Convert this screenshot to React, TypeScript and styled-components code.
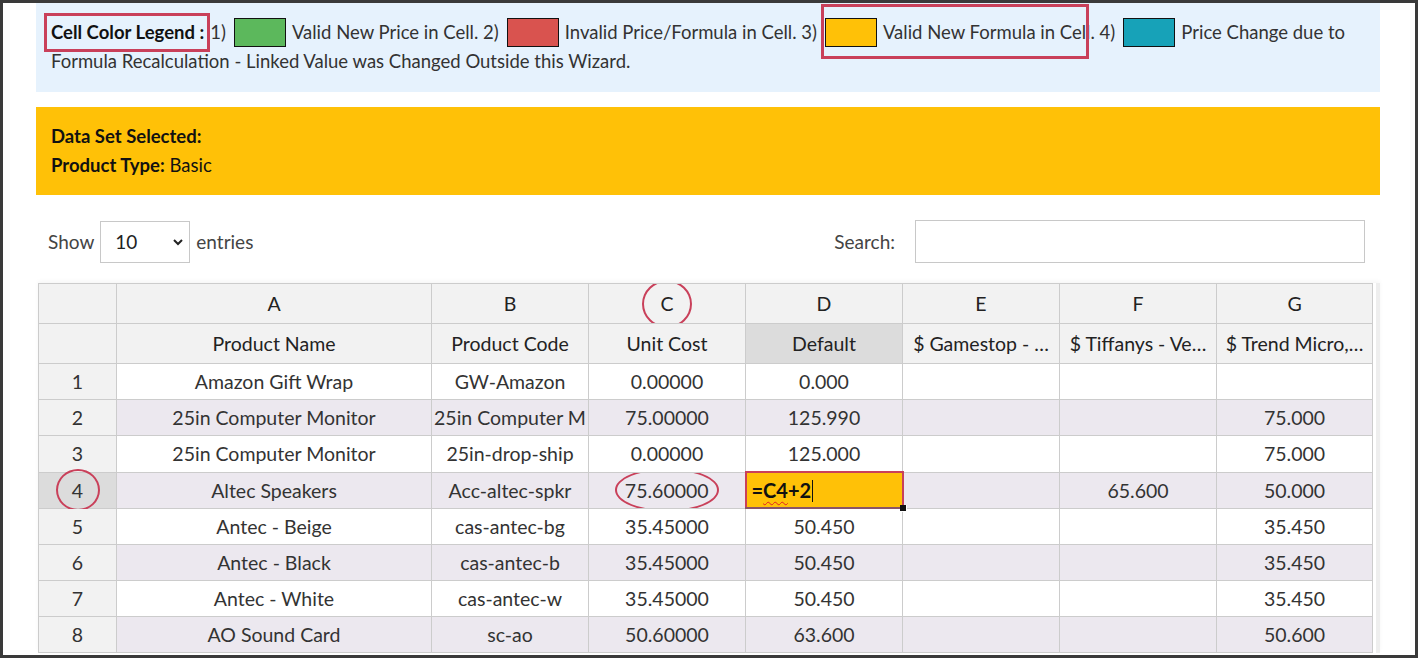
import React from 'react';
import styled, { createGlobalStyle } from 'styled-components';

const GlobalStyle = createGlobalStyle`
  html, body {
    margin: 0;
    padding: 0;
    background: #ffffff;
  }
  body {
    font-family: Lato, "Noto Sans", sans-serif;
    color: #333333;
  }
`;

const ANNOTATION = '#c9405a';

const Frame = styled.div`
  box-sizing: border-box;
  width: 1418px;
  height: 658px;
  border: 3px solid #3a3a3a;
  overflow: hidden;
  padding: 0 35px 0 33px;
  background: #ffffff;
`;

const LegendPanel = styled.div`
  position: relative;
  background-color: #e6f2fd;
  padding: 15px 12px 16px 15px;
  font-size: 18.5px;
  line-height: 29px;
  color: #333;
`;

const LegendTitle = styled.span`
  display: inline-block;
  box-sizing: border-box;
  border: 3px solid ${ANNOTATION};
  padding: 2px 3px 2px 4px;
  line-height: 29px;
  margin: -5px 0 -5px -7px;
  font-weight: 700;
  color: #111;
`;

const Swatch = styled.span<{ $color: string }>`
  display: inline-block;
  box-sizing: border-box;
  width: 52px;
  height: 29px;
  vertical-align: -2px;
  margin: -6px 6px -6px 8px;
  background-color: ${p => p.$color};
  border: 1px solid #111;
`;

const Highlighted = styled.span`
  position: relative;

  &::after {
    content: '';
    position: absolute;
    box-sizing: border-box;
    left: 4px;
    top: -17px;
    width: 268px;
    height: 55px;
    border: 3px solid ${ANNOTATION};
    pointer-events: none;
  }
`;

const DataSetPanel = styled.div`
  margin-top: 15px;
  background-color: #ffc107;
  padding: 15px;
  font-size: 18.5px;
  line-height: 29px;
  color: #111;
`;

const Strong = styled.span`
  font-weight: 700;
`;

const Controls = styled.div`
  display: flex;
  align-items: center;
  justify-content: space-between;
  padding: 25px 15px 0 12px;
  font-size: 19px;
  color: #444;
`;

const LengthControl = styled.label`
  display: flex;
  align-items: center;
  gap: 6px;
`;

const SelectBox = styled.div`
  box-sizing: border-box;
  width: 90px;
  height: 42px;
  border: 1px solid #c8c8c8;
  display: flex;
  align-items: center;
  justify-content: space-between;
  padding: 0 4px 0 14px;
  color: #222;
`;

const SearchControl = styled.label`
  display: flex;
  align-items: center;
  gap: 20px;
`;

const SearchInput = styled.div`
  box-sizing: border-box;
  width: 450px;
  height: 43px;
  border: 1px solid #c8c8c8;
`;

const TableWrap = styled.div`
  margin-top: 20px;
  margin-left: 2px;
  padding-right: 4px;
  border-right: 4px solid #eeeeee;
  box-shadow: 0 -2px 4px rgba(0, 0, 0, 0.04);
  width: 1334px;
`;

const Sheet = styled.table`
  border-collapse: collapse;
  table-layout: fixed;
  width: 1334px;
  font-size: 19.5px;
  color: #333;
`;

const HeadCell = styled.th<{ $shade?: boolean }>`
  position: relative;
  height: 39px;
  padding: 0 4px;
  font-weight: 400;
  text-align: center;
  background-color: ${p => (p.$shade ? '#dcdcdc' : '#f2f2f2')};
  border: 1px solid #cccccc;
  white-space: nowrap;
  overflow: hidden;
  text-overflow: ellipsis;
  color: #222;
`;

const Row = styled.tr<{ $alt: boolean }>`
  background-color: ${p => (p.$alt ? '#ece8ef' : '#ffffff')};
`;

const NumCell = styled.td<{ $active?: boolean }>`
  position: relative;
  height: 35px;
  padding: 0;
  text-align: center;
  background-color: ${p => (p.$active ? '#dcdcdc' : '#f2f2f2')};
  border: 1px solid #cccccc;
  color: #333;
`;

const Cell = styled.td`
  position: relative;
  height: 35px;
  padding: 0 2px;
  text-align: center;
  border: 1px solid #cccccc;
  white-space: nowrap;
  overflow: hidden;
`;

const FormulaCell = styled.td`
  position: relative;
  height: 32px;
  padding: 0 5px;
  background-color: #ffc107;
  border: 2px solid ${ANNOTATION};
  border-bottom-color: #8a5566;
  font-size: 20px;
  font-weight: 700;
  color: #111;
  text-align: left;
`;

const Squiggle = styled.span`
  text-decoration: underline wavy #e02020;
  text-decoration-thickness: 1px;
  text-underline-offset: 3px;
`;

const Caret = styled.span`
  display: inline-block;
  width: 1px;
  height: 22px;
  background: #111;
  vertical-align: -4px;
  margin-left: 1px;
`;

const FillHandle = styled.span`
  position: absolute;
  right: -5px;
  bottom: -5px;
  width: 6px;
  height: 6px;
  background: #111;
  border: 1px solid #fff;
  border-left: none;
  border-top: none;
`;

const Ring = styled.span<{ $w: number; $h: number }>`
  position: absolute;
  left: 50%;
  top: 50%;
  width: ${p => p.$w}px;
  height: ${p => p.$h}px;
  transform: translate(-50%, -50%);
  border: 2px solid ${ANNOTATION};
  border-radius: 50%;
  pointer-events: none;
`;

const Chevron = () => (
  <svg width="14" height="14" viewBox="0 0 14 14">
    <path d="M3 5 L7 9 L11 5" fill="none" stroke="#222" strokeWidth="2" />
  </svg>
);

const columns = ['A', 'B', 'C', 'D', 'E', 'F', 'G'];
const headings = [
  'Product Name',
  'Product Code',
  'Unit Cost',
  'Default',
  '$ Gamestop - …',
  '$ Tiffanys - Ve…',
  '$ Trend Micro,…',
];
const widths = [78, 315, 157, 157, 157, 157, 157, 156];

const rows: string[][] = [
  ['Amazon Gift Wrap', 'GW-Amazon', '0.00000', '0.000', '', '', ''],
  ['25in Computer Monitor', '25in Computer M', '75.00000', '125.990', '', '', '75.000'],
  ['25in Computer Monitor', '25in-drop-ship', '0.00000', '125.000', '', '', '75.000'],
  ['Altec Speakers', 'Acc-altec-spkr', '75.60000', '=C4+2', '', '65.600', '50.000'],
  ['Antec - Beige', 'cas-antec-bg', '35.45000', '50.450', '', '', '35.450'],
  ['Antec - Black', 'cas-antec-b', '35.45000', '50.450', '', '', '35.450'],
  ['Antec - White', 'cas-antec-w', '35.45000', '50.450', '', '', '35.450'],
  ['AO Sound Card', 'sc-ao', '50.60000', '63.600', '', '', '50.600'],
];

const App: React.FC = () => {
  return (
    <>
      <GlobalStyle />
      <Frame>
        <LegendPanel>
          <LegendTitle>Cell Color Legend :</LegendTitle>1)
          <Swatch $color="#5cb85c" />
          Valid New Price in Cell. 2)
          <Swatch $color="#d9534f" />
          Invalid Price/Formula in Cell. 3)
          <Highlighted>
            <Swatch $color="#ffc107" />
            Valid New Formula in Cell.
          </Highlighted>{' '}
          4)
          <Swatch $color="#17a2b8" />
          Price Change due to Formula Recalculation - Linked Value was Changed Outside this Wizard.
        </LegendPanel>

        <DataSetPanel>
          <Strong>Data Set Selected:</Strong>
          <br />
          <Strong>Product Type:</Strong> Basic
        </DataSetPanel>

        <Controls>
          <LengthControl>
            Show
            <SelectBox>
              10
              <Chevron />
            </SelectBox>
            entries
          </LengthControl>
          <SearchControl>
            Search:
            <SearchInput />
          </SearchControl>
        </Controls>

        <TableWrap>
          <Sheet>
            <colgroup>
              {widths.map((w, i) => (
                <col key={i} style={{ width: w }} />
              ))}
            </colgroup>
            <thead>
              <tr>
                <HeadCell />
                {columns.map(c => (
                  <HeadCell key={c}>
                    {c}
                    {c === 'C' && <Ring $w={46} $h={44} />}
                  </HeadCell>
                ))}
              </tr>
              <tr>
                <HeadCell />
                {headings.map(h => (
                  <HeadCell key={h} $shade={h === 'Default'}>
                    {h}
                  </HeadCell>
                ))}
              </tr>
            </thead>
            <tbody>
              {rows.map((r, i) => (
                <Row key={i} $alt={i % 2 === 1}>
                  <NumCell $active={i === 3}>
                    {i + 1}
                    {i === 3 && <Ring $w={40} $h={38} />}
                  </NumCell>
                  {r.map((v, j) =>
                    i === 3 && j === 3 ? (
                      <FormulaCell key={j}>
                        =<Squiggle>C4</Squiggle>+2
                        <Caret />
                        <FillHandle />
                      </FormulaCell>
                    ) : (
                      <Cell key={j}>
                        {v}
                        {i === 3 && j === 2 && <Ring $w={100} $h={40} />}
                      </Cell>
                    ),
                  )}
                </Row>
              ))}
            </tbody>
          </Sheet>
        </TableWrap>
      </Frame>
    </>
  );
};

export default App;
